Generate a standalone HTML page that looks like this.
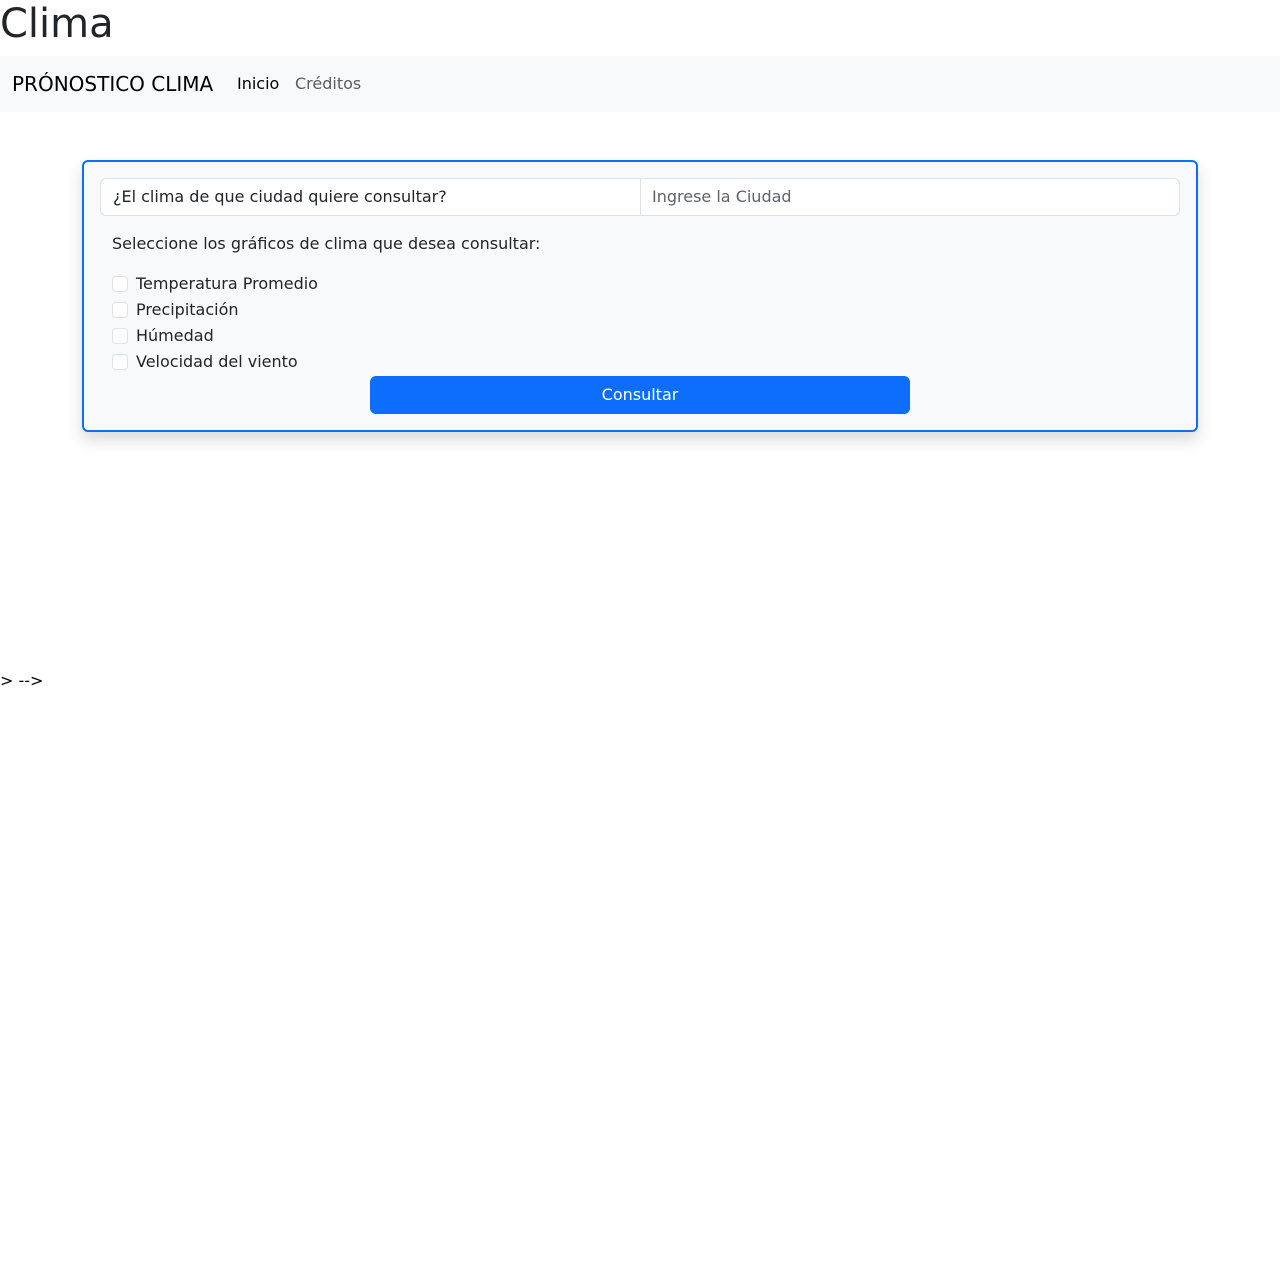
<!DOCTYPE html>
<html><head><meta charset="utf-8"><style>
*{box-sizing:border-box;margin:0;padding:0}
body{width:1280px;height:1280px;background:#fff;font-family:"DejaVu Sans","Liberation Sans",sans-serif;color:#212529;font-size:16px;position:relative;overflow:hidden}
.a{position:absolute;white-space:nowrap}
h1{position:absolute;left:0;top:0;font-size:40px;font-weight:400;line-height:48px}
.nav{position:absolute;left:0;top:56px;width:1280px;height:56px;background:#f8f9fa}
.card{position:absolute;left:82px;top:160px;width:1116px;height:272px;border:2px solid #0d6efd;border-radius:6px;background:#f8f9fa;box-shadow:0 8px 16px rgba(0,0,0,.15)}
.ig{position:absolute;left:100px;top:178px;width:1080px;height:38px;border:1px solid #dee2e6;border-radius:6px;background:#fff}
.ig .sep{position:absolute;left:539px;top:0;width:1px;height:36px;background:#dee2e6}
.cb{position:absolute;left:112px;width:16px;height:16px;border:1px solid #dee2e6;border-radius:4px;background:#fff}
.btn{position:absolute;left:370px;top:376px;width:540px;height:38px;background:#0d6efd;border-radius:6px;color:#fff;text-align:center;line-height:38px}
</style></head><body>
<h1>Clima</h1>
<div class="nav">
<div class="a" style="left:12px;top:15px;font-size:20px;line-height:26px;color:#000">PRÓNOSTICO CLIMA</div>
<div class="a" style="left:237px;top:16px;line-height:24px;color:#000">Inicio</div>
<div class="a" style="left:295px;top:16px;line-height:24px;color:#5c5d5f">Créditos</div>
</div>
<div class="card"></div>
<div class="ig"><div class="sep"></div>
<div class="a" style="left:12px;top:6px;line-height:24px">¿El clima de que ciudad quiere consultar?</div>
<div class="a" style="left:551px;top:6px;line-height:24px;color:#5c636a">Ingrese la Ciudad</div>
</div>
<div class="a" style="left:112px;top:232px;line-height:24px">Seleccione los gráficos de clima que desea consultar:</div>
<div class="cb" style="top:276px"></div><div class="a" style="left:136px;top:272px;line-height:24px">Temperatura Promedio</div>
<div class="cb" style="top:302px"></div><div class="a" style="left:136px;top:298px;line-height:24px">Precipitación</div>
<div class="cb" style="top:328px"></div><div class="a" style="left:136px;top:324px;line-height:24px">Húmedad</div>
<div class="cb" style="top:354px"></div><div class="a" style="left:136px;top:350px;line-height:24px">Velocidad del viento</div>
<div class="btn">Consultar</div>
<div class="a" style="left:0;top:669px;line-height:24px;color:#000">&gt; --&gt;</div>
</body></html>
